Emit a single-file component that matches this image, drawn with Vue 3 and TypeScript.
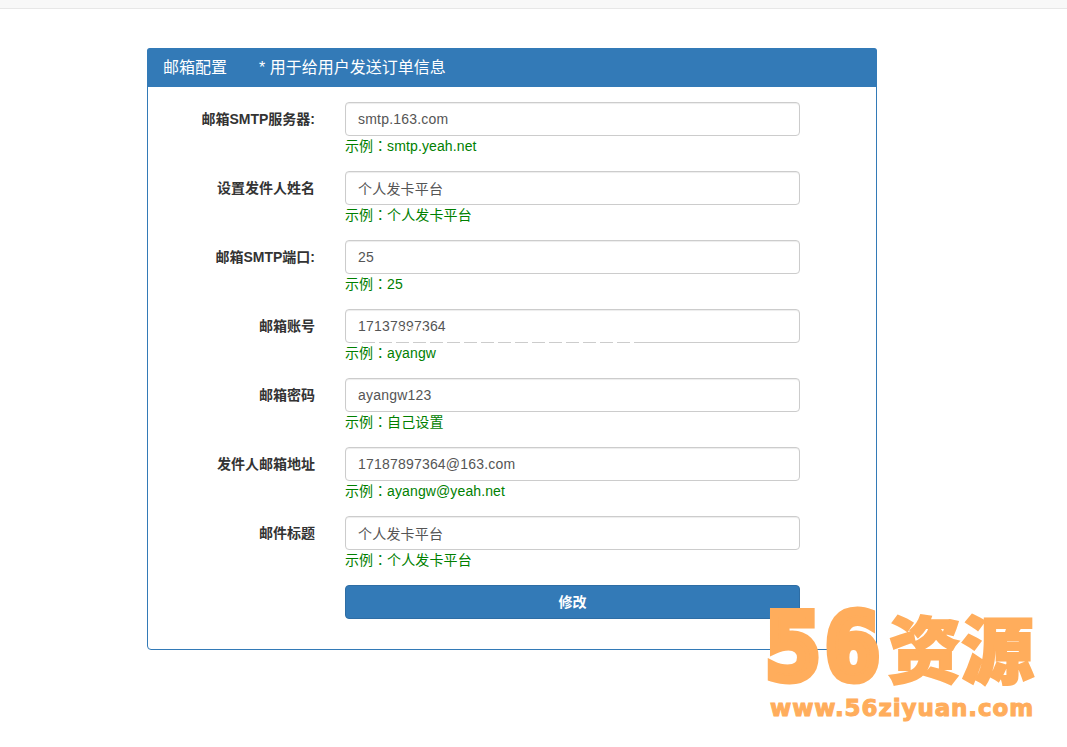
<script setup lang="ts">
interface Field { label: string; value: string; hint: string }
const fields: Field[] = [
  { label: '邮箱SMTP服务器:', value: 'smtp.163.com', hint: 'smtp.yeah.net' },
  { label: '设置发件人姓名', value: '个人发卡平台', hint: '个人发卡平台' },
  { label: '邮箱SMTP端口:', value: '25', hint: '25' },
  { label: '邮箱账号', value: '17137897364', hint: 'ayangw' },
  { label: '邮箱密码', value: 'ayangw123', hint: '自己设置' },
  { label: '发件人邮箱地址', value: '17187897364@163.com', hint: 'ayangw@yeah.net' },
  { label: '邮件标题', value: '个人发卡平台', hint: '个人发卡平台' },
]
</script>

<template>
  <div class="page">
    <div class="topbar"></div>
    <section class="panel">
      <header class="heading">
        <span class="title">邮箱配置</span>
        <span class="note">* 用于给用户发送订单信息</span>
      </header>
      <form class="body" @submit.prevent>
        <div v-for="f in fields" :key="f.label" class="row">
          <label class="label">{{ f.label }}</label>
          <div class="control">
            <input class="input" type="text" :value="f.value" readonly />
            <div class="hint">示例<span class="colon">：</span>{{ f.hint }}</div>
          </div>
        </div>
        <div class="row">
          <span></span>
          <button class="submit" type="submit">修改</button>
        </div>
      </form>
    </section>
    <div class="scratch"></div>
    <div class="scratch-digits"></div>
    <div class="mark">
      <div class="mark-big"><span class="digits">56</span><span class="cjk">资源</span></div>
      <div class="mark-url">www.56ziyuan.com</div>
    </div>
  </div>
</template>

<style>
html, body { margin: 0; background: #fff; }
</style>

<style scoped>
.page {
  position: relative;
  height: 747px;
  overflow: hidden;
  font-family: "Liberation Sans", "Noto Sans CJK SC", sans-serif;
  font-size: 14px;
  color: #333;
}
.topbar {
  height: 8px;
  background: #f8f8f8;
  border-bottom: 1px solid #e7e7e7;
}
.panel {
  width: 730px;
  box-sizing: border-box;
  margin: 39px 0 0 147px;
  border: 1px solid #337ab7;
  border-radius: 4px;
}
.heading {
  display: flex;
  gap: 32px;
  padding: 0 15px 3px 16px;
  height: 36px;
  align-items: center;
  background: #337ab7;
  color: #fff;
  font-size: 16px;
  margin: -1px -1px 0;
  border-radius: 3px 3px 0 0;
}
.body {
  padding: 15px 0 30px 15px;
}
.row {
  display: grid;
  grid-template-columns: 152px 455px;
  column-gap: 30px;
  margin-bottom: 15px;
}
.row:last-child { margin-bottom: 0; }
.label {
  text-align: right;
  font-weight: 700;
  line-height: 20px;
  padding-top: 7px;
}
.input {
  display: block;
  width: 100%;
  height: 34px;
  box-sizing: border-box;
  padding: 6px 12px;
  font: 14px "Liberation Sans", "Noto Sans CJK SC", sans-serif;
  letter-spacing: 0.2px;
  color: #555;
  background: #fff;
  border: 1px solid #ccc;
  border-radius: 4px;
  box-shadow: inset 0 1px 1px rgba(0, 0, 0, .075);
  outline: none;
}
.hint {
  height: 20px;
  color: green;
  line-height: 20px;
  letter-spacing: 0.12px;
}
.colon {
  font-family: "Noto Sans CJK TC", sans-serif;
  letter-spacing: -0.2px;
  line-height: 0;
}
.submit {
  display: block;
  height: 34px;
  padding: 0 0 2px;
  font: 700 14px "Liberation Sans", "Noto Sans CJK SC", sans-serif;
  color: #fff;
  background: #337ab7;
  border: 1px solid #2e6da4;
  border-radius: 4px;
}
.scratch {
  position: absolute;
  left: 345px;
  top: 342px;
  width: 295px;
  height: 1px;
  background: repeating-linear-gradient(to right, transparent 0 13px, #fff 13px 17px);
}
.scratch-digits {
  position: absolute;
  left: 396px;
  top: 326px;
  width: 30px;
  height: 7px;
  background: repeating-linear-gradient(115deg, transparent 0 3px, rgba(255, 255, 255, .65) 3px 6px);
}
.mark {
  position: absolute;
  left: 766px;
  top: 600px;
  width: 270px;
  color: #ffad5c;
  text-shadow: 0 0 1px #ffe9c9;
}
.mark-big {
  display: flex;
  align-items: center;
  height: 96px;
  white-space: nowrap;
}
.digits {
  width: 122px;
  font-family: "DejaVu Sans Mono", monospace;
  font-weight: 700;
  font-size: 90px;
  letter-spacing: 5px;
  line-height: 96px;
  -webkit-text-stroke: 9px #ffad5c;
}
.cjk {
  padding-bottom: 5px;
  font-family: "Noto Sans CJK SC", sans-serif;
  font-weight: 900;
  font-size: 73px;
  line-height: 91px;
  -webkit-text-stroke: 2px #ffad5c;
}
.mark-url {
  padding-left: 4px;
  font-family: "DejaVu Sans", sans-serif;
  font-weight: 700;
  font-size: 23px;
  letter-spacing: 0.9px;
  line-height: 24px;
  -webkit-text-stroke: 1px #ffad5c;
  white-space: nowrap;
}
</style>
